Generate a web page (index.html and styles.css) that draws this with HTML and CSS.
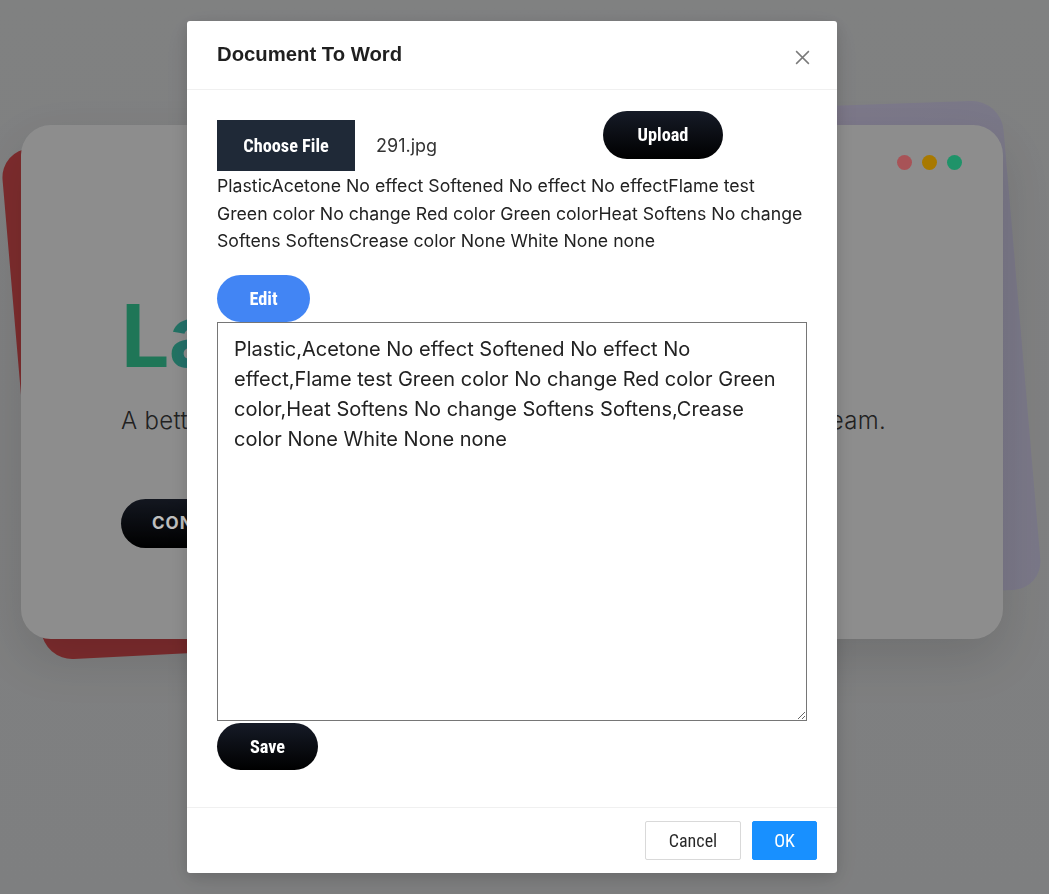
FILE: index.html
```html
<!DOCTYPE html>
<html lang="en">
<head>
<meta charset="utf-8">
<title>Document To Word</title>
<link rel="stylesheet" href="styles.css">
</head>
<body>
  <div class="page">
    <div class="stack">
      <div class="card-back card-red"></div>
      <div class="card-back card-lavender"></div>
      <div class="card">
        <div class="dots">
          <span class="dot dot-red"></span>
          <span class="dot dot-amber"></span>
          <span class="dot dot-green"></span>
        </div>
        <h1 class="hero-title">Launch</h1>
        <p class="hero-sub">A better way to plan, build and ship products with your entire team.</p>
        <button class="hero-btn">CONTACT US</button>
      </div>
    </div>
  </div>

  <div class="mask"></div>

  <div class="modal" role="dialog">
    <div class="modal-header">
      <div class="modal-title">Document To Word</div>
      <button class="modal-close" aria-label="Close">
        <svg width="17" height="17" viewBox="0 0 16 16"><path d="M2 2 L14 14 M14 2 L2 14" stroke="#7a7a7a" stroke-width="1.4" fill="none"/></svg>
      </button>
    </div>
    <div class="modal-body">
      <div class="upload-row">
        <div class="file-field">
          <span class="choose-btn">Choose File</span>
          <span class="file-name">291.jpg</span>
        </div>
        <button class="pill-btn pill-dark upload-btn">Upload</button>
      </div>
      <p class="extracted">PlasticAcetone No effect Softened No effect No effectFlame test Green color No change Red color Green colorHeat Softens No change Softens SoftensCrease color None White None none</p>
      <button class="pill-btn pill-blue edit-btn">Edit</button>
      <textarea class="editor">Plastic,Acetone No effect Softened No effect No effect,Flame test Green color No change Red color Green color,Heat Softens No change Softens Softens,Crease color None White None none</textarea>
      <button class="pill-btn pill-dark save-btn">Save</button>
    </div>
    <div class="modal-footer">
      <button class="btn btn-default">Cancel</button>
      <button class="btn btn-primary">OK</button>
    </div>
  </div>
</body>
</html>
```

FILE: styles.css
```css
* { box-sizing: border-box; }

html, body {
  margin: 0;
  height: 894px;
  overflow: hidden;
}

body {
  font-family: Inter, "Noto Sans", sans-serif;
  background: linear-gradient(180deg, #abacad 0%, #a9aaab 100%);
}

.page {
  width: 1024px;
  padding-top: 125px;
}

.stack {
  position: relative;
  width: 982px;
  height: 514px;
  margin: 0 auto;
}

.card-back {
  position: absolute;
  border-radius: 30px;
}

.card-red {
  left: -21px;
  top: 25px;
  width: 780px;
  height: 512px;
  background: #a73b3d;
  transform-origin: 0 0;
  transform: rotate(-2.9deg) skewX(2deg);
}

.card-lavender {
  left: 40px;
  top: -25px;
  width: 940px;
  height: 490px;
  background: linear-gradient(90deg, #b5a0ab 0%, #b0a2b4 70%, #a6a1b8 85%, #a3a0b5 100%);
  transform-origin: 100% 0;
  transform: rotate(-2deg) skewX(2.9deg);
}

.card {
  position: relative;
  height: 514px;
  background: #bdbdbd;
  border-radius: 30px;
  padding: 0 100px;
  box-shadow: 0 20px 50px rgba(0, 0, 0, 0.12);
}

.dots {
  position: absolute;
  top: 30px;
  right: 41px;
  display: flex;
  gap: 10px;
}

.dot {
  width: 15px;
  height: 15px;
  border-radius: 50%;
}
.dot-red { background: #e06f75; }
.dot-amber { background: #e0a200; }
.dot-green { background: #2ac48c; }

.hero-title {
  margin: 0;
  padding-top: 164px;
  font-family: Inter, sans-serif;
  font-weight: 700;
  font-size: 86px;
  line-height: 1.1;
  letter-spacing: -1px;
  background: linear-gradient(90deg, #2a9e74 0%, #2a9e74 8%, #3592a2 16%, #3070c0 40%);
  -webkit-background-clip: text;
  background-clip: text;
  color: transparent;
  width: 500px;
}

.hero-sub {
  margin: 19px 0 0;
  font-family: Inter, sans-serif;
  font-weight: 300;
  font-size: 24px;
  line-height: 36px;
  letter-spacing: 0.3px;
  color: #2d2d2d;
  white-space: nowrap;
}

.hero-btn {
  margin-top: 60px;
  height: 49px;
  padding: 0 31px;
  border: none;
  border-radius: 25px;
  background: linear-gradient(180deg, #1a1f2b 0%, #000 100%);
  color: #ffffff;
  font-family: Inter, sans-serif;
  font-weight: 700;
  font-size: 17px;
  letter-spacing: 1px;
}

/* ---------- mask & modal ---------- */

.mask {
  position: fixed;
  inset: 0;
  background: rgba(0, 0, 0, 0.25);
}

.modal {
  position: fixed;
  top: 21px;
  left: 187px;
  width: 650px;
  background: #fff;
  border-radius: 3px;
  box-shadow: 0 4px 14px rgba(0, 0, 0, 0.12), 0 8px 30px rgba(0, 0, 0, 0.08);
}

.modal-header {
  position: relative;
  height: 69px;
  padding: 19px 30px 0;
  border-bottom: 1px solid #f0f0f0;
}

.modal-title {
  font-family: "Liberation Sans", Arial, sans-serif;
  font-weight: 700;
  font-size: 20.3px;
  line-height: 28px;
  color: #1f1f1f;
}

.modal-close {
  position: absolute;
  top: 0;
  right: 0;
  width: 70px;
  height: 73px;
  border: none;
  background: transparent;
  padding: 0;
  display: flex;
  align-items: center;
  justify-content: center;
}

.modal-body {
  padding: 21px 30px 37px;
}

.upload-row {
  display: flex;
  align-items: flex-start;
}

.file-field {
  width: 386px;
  margin-top: 9px;
  display: flex;
  align-items: center;
  gap: 21px;
}

.choose-btn,
.pill-btn,
.btn {
  font-family: Roboto, "Liberation Sans", sans-serif;
  font-stretch: 75%;
}

.choose-btn {
  width: 138px;
  height: 51px;
  background: #1f2937;
  color: #fff;
  display: flex;
  align-items: center;
  justify-content: center;
  font-weight: 700;
  font-size: 18.3px;
}

.file-name {
  font-family: Inter, sans-serif;
  font-size: 18px;
  color: #333;
}

.pill-btn {
  display: flex;
  align-items: center;
  justify-content: center;
  height: 47px;
  border: none;
  border-radius: 24px;
  color: #fff;
  padding: 0;
  font-weight: 700;
  font-size: 18.3px;
}

.pill-dark {
  background: linear-gradient(180deg, #161b27 0%, #000 100%);
}

.pill-blue {
  background: #4285f4;
}

.upload-btn {
  width: 120px;
  height: 48px;
  padding-bottom: 2px;
}

.edit-btn {
  width: 93px;
}

.save-btn {
  width: 101px;
  margin-top: 2px;
}

.extracted {
  margin: 1px 0 20.5px;
  font-family: Inter, sans-serif;
  font-size: 17.7px;
  line-height: 27.5px;
  color: #222;
}

.editor {
  display: block;
  width: 590px;
  height: 399px;
  margin: 0;
  padding: 11px 16px;
  border: 1px solid #767676;
  border-radius: 0;
  font-family: Inter, sans-serif;
  font-size: 20px;
  line-height: 30px;
  color: #222;
  background: #fff;
}

.modal-footer {
  display: flex;
  justify-content: flex-end;
  gap: 11px;
  padding: 13px 20px;
  border-top: 1px solid #f0f0f0;
}

.btn {
  height: 39px;
  border-radius: 2px;
  font-size: 18px;
  padding: 0;
}

.btn-default {
  width: 96px;
  background: #fff;
  border: 1px solid #d9d9d9;
  color: rgba(0, 0, 0, 0.85);
}

.btn-primary {
  width: 65px;
  background: #1890ff;
  border: 1px solid #1890ff;
  color: #fff;
}
```
